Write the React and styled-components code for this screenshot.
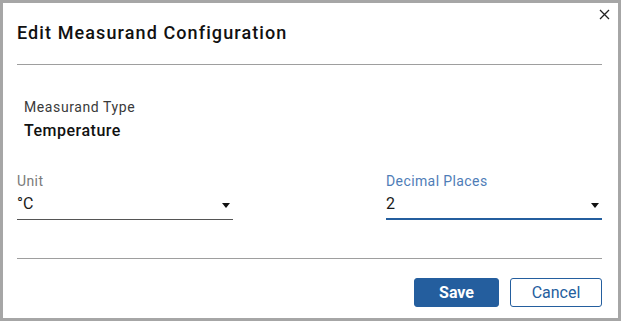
import styled, { createGlobalStyle } from "styled-components";

const Global = createGlobalStyle`
  body {
    margin: 0;
    font-family: Roboto, "Liberation Sans", sans-serif;
    background: #fff;
  }
`;

const Dialog = styled.div`
  position: relative;
  box-sizing: border-box;
  width: 621px;
  height: 321px;
  border: 3px solid #a6a6a6;
  background: #fff;
  padding: 18px 16px 0 14px;
  display: flex;
  flex-direction: column;
`;

const Title = styled.h2`
  margin: 0;
  font-size: 18px;
  line-height: 24px;
  font-weight: 500;
  color: #111;
  letter-spacing: 1.1px;
`;

const Close = styled.button`
  position: absolute;
  top: 5px;
  right: 8px;
  width: 12px;
  height: 12px;
  padding: 0;
  border: none;
  background: none;
  display: flex;
  align-items: center;
  justify-content: center;
  cursor: pointer;
`;

const Divider = styled.hr`
  margin: ${(p) => p.$top}px 0 0;
  border: none;
  border-top: 1px solid #9e9e9e;
  height: 0;
`;

const TypeBlock = styled.div`
  margin-top: 33px;
  padding-left: 7px;
  display: flex;
  flex-direction: column;
  gap: 5px;
`;

const TypeLabel = styled.div`
  font-size: 14px;
  line-height: 18px;
  color: #3a3a3a;
  letter-spacing: 0.6px;
`;

const TypeValue = styled.div`
  font-size: 16px;
  line-height: 20px;
  font-weight: 500;
  color: #111;
  letter-spacing: 0.5px;
`;

const Fields = styled.div`
  margin-top: 32px;
  display: flex;
  justify-content: space-between;
`;

const Field = styled.div`
  width: 216px;
  display: flex;
  flex-direction: column;
  gap: 5px;
`;

const FieldLabel = styled.div`
  font-size: 14px;
  line-height: 16px;
  letter-spacing: 0.4px;
  color: ${(p) => (p.$active ? "#4f7db7" : "#7a7a7a")};
`;

const Select = styled.div`
  display: flex;
  align-items: center;
  justify-content: space-between;
  font-size: 16px;
  line-height: 20px;
  color: #1a1a1a;
  padding-bottom: ${(p) => (p.$active ? 4 : 5)}px;
  border-bottom: ${(p) => (p.$active ? "2px solid #245e9e" : "1px solid #555")};
`;

const Arrow = styled.span`
  width: 0;
  height: 0;
  margin-right: 3px;
  margin-top: 3px;
  border-left: 4.5px solid transparent;
  border-right: 4.5px solid transparent;
  border-top: 5px solid #111;
`;

const Actions = styled.div`
  margin-top: 19px;
  display: flex;
  justify-content: flex-end;
  gap: 11px;
`;

const Button = styled.button`
  box-sizing: border-box;
  height: 29px;
  width: ${(p) => (p.$primary ? 85 : 92)}px;
  border-radius: 3px;
  font-family: Roboto, "Liberation Sans", sans-serif;
  font-size: 16px;
  font-weight: ${(p) => (p.$primary ? 700 : 400)};
  color: ${(p) => (p.$primary ? "#fff" : "#245e9e")};
  background: ${(p) => (p.$primary ? "#245e9e" : "#fff")};
  border: 1px solid #245e9e;
  cursor: pointer;
  padding: 0;
`;

export default function App() {
  return (
    <>
      <Global />
      <Dialog>
        <Close aria-label="Close">
          <svg width="11" height="11" viewBox="0 0 11 11">
            <path d="M1 1 L10 10 M10 1 L1 10" stroke="#222" strokeWidth="1.3" />
          </svg>
        </Close>
        <Title>Edit Measurand Configuration</Title>
        <Divider $top={19} />
        <TypeBlock>
          <TypeLabel>Measurand Type</TypeLabel>
          <TypeValue>Temperature</TypeValue>
        </TypeBlock>
        <Fields>
          <Field>
            <FieldLabel>Unit</FieldLabel>
            <Select>
              °C
              <Arrow />
            </Select>
          </Field>
          <Field>
            <FieldLabel $active>Decimal Places</FieldLabel>
            <Select $active>
              2
              <Arrow />
            </Select>
          </Field>
        </Fields>
        <Divider $top={38} />
        <Actions>
          <Button $primary>Save</Button>
          <Button>Cancel</Button>
        </Actions>
      </Dialog>
    </>
  );
}
